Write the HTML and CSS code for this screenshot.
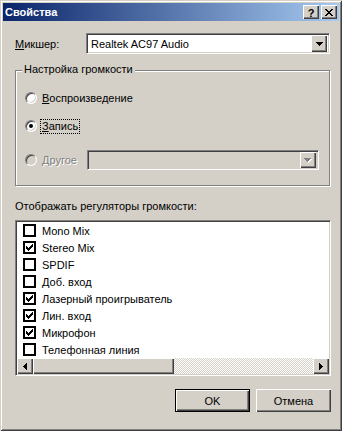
FILE: index.html
```html
<!DOCTYPE html>
<html>
<head>
<meta charset="utf-8">
<link rel="stylesheet" href="styles.css">
</head>
<body>
<div class="window">
  <div class="titlebar">
    <span class="title">Свойства</span>
    <div class="caption-btns">
      <div class="cbtn help">?</div>
      <div class="cbtn close">
        <svg width="8" height="7" viewBox="0 0 8 7" shape-rendering="crispEdges">
          <rect x="0" y="0" width="2" height="1"/><rect x="6" y="0" width="2" height="1"/>
          <rect x="1" y="1" width="2" height="1"/><rect x="5" y="1" width="2" height="1"/>
          <rect x="2" y="2" width="4" height="1"/>
          <rect x="3" y="3" width="2" height="1"/>
          <rect x="2" y="4" width="4" height="1"/>
          <rect x="1" y="5" width="2" height="1"/><rect x="5" y="5" width="2" height="1"/>
          <rect x="0" y="6" width="2" height="1"/><rect x="6" y="6" width="2" height="1"/>
        </svg>
      </div>
    </div>
  </div>
  <div class="client">
    <div class="mixer-row">
      <span class="mixer-label"><u>М</u>икшер:</span>
      <div class="combo mixer-combo">
        <span class="combo-text">Realtek AC97 Audio</span>
        <div class="combo-btn">
          <svg class="arrow" width="7" height="4" viewBox="0 0 7 4" shape-rendering="crispEdges">
            <rect x="0" y="0" width="7" height="1"/><rect x="1" y="1" width="5" height="1"/>
            <rect x="2" y="2" width="3" height="1"/><rect x="3" y="3" width="1" height="1"/>
          </svg>
        </div>
      </div>
    </div>

    <div class="group">
      <span class="group-label">Настройка громкости</span>
      <div class="radio-row r1"><span class="radio"></span><span class="rlabel"><u>В</u>оспроизведение</span></div>
      <div class="radio-row r2"><span class="radio checked"></span><span class="rlabel focus"><u>З</u>апись</span></div>
      <div class="radio-row r3 disabled">
        <span class="radio"></span><span class="rlabel other"><u>Д</u>ругое</span>
        <div class="combo other-combo">
          <span class="combo-text"></span>
          <div class="combo-btn small">
            <svg class="arrow" width="8" height="5" viewBox="0 0 8 5" shape-rendering="crispEdges">
              <g fill="#fff">
                <rect x="1" y="1" width="7" height="1"/><rect x="2" y="2" width="5" height="1"/>
                <rect x="3" y="3" width="3" height="1"/><rect x="4" y="4" width="1" height="1"/>
              </g>
              <g fill="#808080">
                <rect x="0" y="0" width="7" height="1"/><rect x="1" y="1" width="5" height="1"/>
                <rect x="2" y="2" width="3" height="1"/><rect x="3" y="3" width="1" height="1"/>
              </g>
            </svg>
          </div>
        </div>
      </div>
    </div>

    <div class="list-label">Отображать регуляторы громкости:</div>

    <div class="listbox">
      <div class="items">
        <div class="item"><span class="check"></span><span>Mono Mix</span></div>
        <div class="item"><span class="check on"><svg width="7" height="7" viewBox="0 0 7 7" shape-rendering="crispEdges"><rect x="0" y="2" width="1" height="3"/><rect x="1" y="3" width="1" height="3"/><rect x="2" y="4" width="1" height="3"/><rect x="3" y="3" width="1" height="3"/><rect x="4" y="2" width="1" height="3"/><rect x="5" y="1" width="1" height="3"/><rect x="6" y="0" width="1" height="3"/></svg></span><span>Stereo Mix</span></div>
        <div class="item"><span class="check"></span><span>SPDIF</span></div>
        <div class="item"><span class="check"></span><span>Доб. вход</span></div>
        <div class="item"><span class="check on"><svg width="7" height="7" viewBox="0 0 7 7" shape-rendering="crispEdges"><rect x="0" y="2" width="1" height="3"/><rect x="1" y="3" width="1" height="3"/><rect x="2" y="4" width="1" height="3"/><rect x="3" y="3" width="1" height="3"/><rect x="4" y="2" width="1" height="3"/><rect x="5" y="1" width="1" height="3"/><rect x="6" y="0" width="1" height="3"/></svg></span><span>Лазерный проигрыватель</span></div>
        <div class="item"><span class="check on"><svg width="7" height="7" viewBox="0 0 7 7" shape-rendering="crispEdges"><rect x="0" y="2" width="1" height="3"/><rect x="1" y="3" width="1" height="3"/><rect x="2" y="4" width="1" height="3"/><rect x="3" y="3" width="1" height="3"/><rect x="4" y="2" width="1" height="3"/><rect x="5" y="1" width="1" height="3"/><rect x="6" y="0" width="1" height="3"/></svg></span><span>Лин. вход</span></div>
        <div class="item"><span class="check on"><svg width="7" height="7" viewBox="0 0 7 7" shape-rendering="crispEdges"><rect x="0" y="2" width="1" height="3"/><rect x="1" y="3" width="1" height="3"/><rect x="2" y="4" width="1" height="3"/><rect x="3" y="3" width="1" height="3"/><rect x="4" y="2" width="1" height="3"/><rect x="5" y="1" width="1" height="3"/><rect x="6" y="0" width="1" height="3"/></svg></span><span>Микрофон</span></div>
        <div class="item"><span class="check"></span><span>Телефонная линия</span></div>
      </div>
      <div class="hscroll">
        <div class="sbtn">
          <svg width="4" height="7" viewBox="0 0 4 7" shape-rendering="crispEdges">
            <rect x="0" y="3" width="1" height="1"/><rect x="1" y="2" width="1" height="3"/>
            <rect x="2" y="1" width="1" height="5"/><rect x="3" y="0" width="1" height="7"/>
          </svg>
        </div>
        <div class="thumb"></div>
        <div class="track"></div>
        <div class="sbtn">
          <svg width="4" height="7" viewBox="0 0 4 7" shape-rendering="crispEdges">
            <rect x="0" y="0" width="1" height="7"/><rect x="1" y="1" width="1" height="5"/>
            <rect x="2" y="2" width="1" height="3"/><rect x="3" y="3" width="1" height="1"/>
          </svg>
        </div>
      </div>
    </div>

    <div class="buttons">
      <button class="btn default">OK</button>
      <button class="btn">Отмена</button>
    </div>
  </div>
</div>
</body>
</html>
```

FILE: styles.css
```css
* { box-sizing: border-box; }

body {
  margin: 0;
  background: #d4d0c8;
  font-family: "Liberation Sans", Arial, sans-serif;
  font-size: 11px;
  color: #000;
}

.window {
  width: 342px;
  height: 431px;
  background: #d4d0c8;
  padding: 3px;
  display: flex;
  flex-direction: column;
  box-shadow: inset 1px 1px #d4d0c8, inset -1px -1px #404040, inset 2px 2px #fff, inset -2px -2px #808080;
}

.titlebar {
  height: 18px;
  flex: none;
  display: flex;
  align-items: center;
  background: linear-gradient(to right, #0a246a, #a6caf0);
  padding: 0 2px;
  margin-bottom: 1px;
}

.title {
  flex: 1;
  color: #fff;
  font-weight: bold;
  line-height: 18px;
}

.caption-btns {
  display: flex;
  gap: 2px;
}

.cbtn {
  width: 16px;
  height: 14px;
  background: #d4d0c8;
  box-shadow: inset 1px 1px #fff, inset -1px -1px #404040, inset -2px -2px #808080;
  display: flex;
  align-items: center;
  justify-content: center;
  font-weight: bold;
  font-size: 11px;
  line-height: 14px;
}

.cbtn.help { padding-top: 1px; }

.client {
  flex: 1;
  display: flex;
  flex-direction: column;
  padding: 11px 8px 0 12px;
}

.mixer-row {
  display: flex;
  align-items: center;
  height: 21px;
}

.mixer-label {
  width: 71px;
}

.combo {
  display: flex;
  align-items: center;
  background: #fff;
  border: 1px solid;
  border-color: #808080 #fff #fff #808080;
  box-shadow: inset 1px 1px #404040, inset -1px -1px #d4d0c8;
  padding: 2px;
}

.mixer-combo {
  width: 244px;
  height: 21px;
}

.combo-text {
  flex: 1;
  padding-left: 2px;
}

.combo-btn {
  width: 16px;
  height: 17px;
  background: #d4d0c8;
  box-shadow: inset 1px 1px #fff, inset -1px -1px #404040, inset -2px -2px #808080;
  display: flex;
  align-items: center;
  justify-content: center;
}

.combo-btn.small { height: 16px; }

.group {
  position: relative;
  margin-top: 16px;
  width: 315px;
  height: 116px;
  border: 1px solid #808080;
  box-shadow: inset 1px 1px #fff, 1px 1px #fff;
  padding: 19px 0 0 9px;
  display: flex;
  flex-direction: column;
}

.group-label {
  position: absolute;
  left: 6px;
  top: -8px;
  padding: 0 2px;
  line-height: 13px;
  background: #d4d0c8;
}

.radio-row {
  display: flex;
  align-items: center;
  gap: 4px;
  height: 16px;
}

.radio-row.r2 { margin-top: 12px; }
.radio-row.r3 { margin-top: 16px; height: 20px; }

.radio {
  position: relative;
  width: 12px;
  height: 12px;
  flex: none;
  border-radius: 50%;
  background: #fff;
  border: 1px solid;
  border-color: #808080 #fff #fff #808080;
  box-shadow: inset 1px 1px #404040, inset -1px -1px #d4d0c8;
}

.radio.checked::after {
  content: "";
  position: absolute;
  left: 3px;
  top: 3px;
  width: 4px;
  height: 4px;
  border-radius: 50%;
  background: #000;
}

.rlabel {
  line-height: 13px;
  padding: 0 1px;
}

.rlabel.focus {
  outline: 1px dotted #000;
}

.disabled .radio { background: #d4d0c8; }

.disabled .rlabel {
  color: #808080;
  text-shadow: 1px 1px #fff;
}

.rlabel.other { width: 42px; }

.other-combo {
  width: 232px;
  height: 20px;
  background: #d4d0c8;
  justify-content: flex-end;
}

.list-label {
  margin-top: 14px;
  line-height: 13px;
}

.listbox {
  margin-top: 7px;
  width: 316px;
  height: 156px;
  background: #fff;
  border: 1px solid;
  border-color: #808080 #fff #fff #808080;
  box-shadow: inset 1px 1px #404040, inset -1px -1px #d4d0c8;
  padding: 1px;
  display: flex;
  flex-direction: column;
}

.items {
  height: 136px;
  display: flex;
  flex-direction: column;
}

.item {
  height: 17px;
  display: flex;
  align-items: center;
  gap: 6px;
  padding-left: 6px;
}

.check {
  width: 13px;
  height: 13px;
  border: 2px solid #000;
  background: #fff;
  display: flex;
  align-items: center;
  justify-content: center;
}

.hscroll {
  height: 16px;
  display: flex;
}

.sbtn {
  width: 16px;
  height: 16px;
  background: #d4d0c8;
  box-shadow: inset 1px 1px #fff, inset -1px -1px #404040, inset -2px -2px #808080;
  display: flex;
  align-items: center;
  justify-content: center;
}

.thumb {
  width: 141px;
  height: 16px;
  background: #d4d0c8;
  box-shadow: inset 1px 1px #fff, inset -1px -1px #404040, inset -2px -2px #808080;
}

.track {
  flex: 1;
  background: repeating-conic-gradient(#d4d0c8 0 25%, #fff 0 50%) 0 0 / 2px 2px;
}

.buttons {
  margin-top: 13px;
  display: flex;
  justify-content: flex-end;
  gap: 6px;
}

.btn {
  width: 75px;
  height: 23px;
  margin: 0;
  padding: 0;
  border: none;
  background: #d4d0c8;
  font-family: inherit;
  font-size: 11px;
  color: #000;
  box-shadow: inset 1px 1px #fff, inset -1px -1px #404040, inset -2px -2px #808080;
}

.btn.default {
  border: 1px solid #000;
}
```
